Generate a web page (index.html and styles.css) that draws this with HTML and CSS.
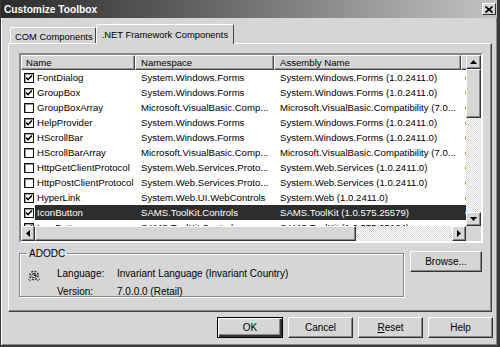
FILE: index.html
```html
<!DOCTYPE html>
<html lang="en">
<head>
  <meta charset="UTF-8">
  <title>Customize Toolbox</title>
  <link rel="stylesheet" href="styles.css">
</head>
<body>

<div class="window">
  <div class="titlebar">
    <span class="title">Customize Toolbox</span>
    <span class="close">
      <svg width="8" height="7" viewBox="0 0 8 7"><path d="M0.5 0.5 L7.5 6.5 M7.5 0.5 L0.5 6.5" stroke="#000" stroke-width="1.6"/></svg>
    </span>
  </div>

  <div class="tabs">
    <div class="tab">COM Components</div>
    <div class="tab active">.NET Framework Components</div>
  </div>

  <div class="panel">
    <div class="list">
      <div class="list-view">
        <div class="row head">
          <div class="hcell">Name</div>
          <div class="hcell">Namespace</div>
          <div class="hcell">Assembly Name</div>
          <div class="hcell">Directory</div>
        </div>
        <div class="row"><div class="cell name"><span class="check on"></span>FontDialog</div><div class="cell">System.Windows.Forms</div><div class="cell">System.Windows.Forms (1.0.2411.0)</div><div class="cell last">C</div></div>
        <div class="row"><div class="cell name"><span class="check on"></span>GroupBox</div><div class="cell">System.Windows.Forms</div><div class="cell">System.Windows.Forms (1.0.2411.0)</div><div class="cell last">C</div></div>
        <div class="row"><div class="cell name"><span class="check"></span>GroupBoxArray</div><div class="cell">Microsoft.VisualBasic.Comp...</div><div class="cell">Microsoft.VisualBasic.Compatibility (7.0...</div><div class="cell last">C</div></div>
        <div class="row"><div class="cell name"><span class="check on"></span>HelpProvider</div><div class="cell">System.Windows.Forms</div><div class="cell">System.Windows.Forms (1.0.2411.0)</div><div class="cell last">C</div></div>
        <div class="row"><div class="cell name"><span class="check on"></span>HScrollBar</div><div class="cell">System.Windows.Forms</div><div class="cell">System.Windows.Forms (1.0.2411.0)</div><div class="cell last">C</div></div>
        <div class="row"><div class="cell name"><span class="check"></span>HScrollBarArray</div><div class="cell">Microsoft.VisualBasic.Comp...</div><div class="cell">Microsoft.VisualBasic.Compatibility (7.0...</div><div class="cell last">C</div></div>
        <div class="row"><div class="cell name"><span class="check"></span>HttpGetClientProtocol</div><div class="cell">System.Web.Services.Proto...</div><div class="cell">System.Web.Services (1.0.2411.0)</div><div class="cell last">C</div></div>
        <div class="row"><div class="cell name"><span class="check"></span>HttpPostClientProtocol</div><div class="cell">System.Web.Services.Proto...</div><div class="cell">System.Web.Services (1.0.2411.0)</div><div class="cell last">C</div></div>
        <div class="row"><div class="cell name"><span class="check on"></span>HyperLink</div><div class="cell">System.Web.UI.WebControls</div><div class="cell">System.Web (1.0.2411.0)</div><div class="cell last">C</div></div>
        <div class="row selected"><div class="cell name"><span class="check on"></span>IconButton</div><div class="cell">SAMS.ToolKit.Controls</div><div class="cell">SAMS.ToolKit (1.0.575.25579)</div><div class="cell last">C</div></div>
        <div class="row"><div class="cell name"><span class="check on"></span>IconButton</div><div class="cell">SAMS.ToolKit.Controls</div><div class="cell">SAMS.ToolKit (1.0.575.25164)</div><div class="cell last">C</div></div>
      </div>

      <div class="vscroll">
        <span class="sbtn"><svg width="7" height="4" viewBox="0 0 7 4"><path d="M3.5 0 L7 4 L0 4 Z"/></svg></span>
        <span class="thumb v"></span>
        <span class="track"></span>
        <span class="sbtn"><svg width="7" height="4" viewBox="0 0 7 4"><path d="M0 0 L7 0 L3.5 4 Z"/></svg></span>
      </div>

      <div class="hscroll">
        <span class="sbtn"><svg width="4" height="7" viewBox="0 0 4 7"><path d="M4 0 L4 7 L0 3.5 Z"/></svg></span>
        <span class="thumb h"></span>
        <span class="track"></span>
        <span class="sbtn"><svg width="4" height="7" viewBox="0 0 4 7"><path d="M0 0 L4 3.5 L0 7 Z"/></svg></span>
      </div>
      <div class="corner"></div>
    </div>

    <div class="info">
      <fieldset class="group">
        <legend>ADODC</legend>
        <div class="group-body">
          <svg class="gear" width="14" height="13" viewBox="0 0 14 13">
            <circle cx="7" cy="6.5" r="4.2" fill="none" stroke="#333" stroke-width="1.4" stroke-dasharray="2 1.3"/>
            <circle cx="7" cy="6.5" r="2.2" fill="#fff" stroke="#333"/>
            <path d="M7 4.5 V6.5 H9" stroke="#000" fill="none"/>
            <path d="M1 10 L4 12 M10 12 L13 10" stroke="#555"/>
          </svg>
          <div class="props">
            <span class="key">Language:</span><span>Invariant Language (Invariant Country)</span>
            <span class="key">Version:</span><span>7.0.0.0 (Retail)</span>
          </div>
        </div>
      </fieldset>
      <button class="btn browse">Browse...</button>
    </div>
  </div>

  <div class="buttons">
    <button class="btn default">OK</button>
    <button class="btn">Cancel</button>
    <button class="btn"><u>R</u>eset</button>
    <button class="btn">Help</button>
  </div>
</div>

</body>
</html>
```

FILE: styles.css
```css
body { margin: 0; background: #d6d6d6; font-family: "Liberation Sans", Arial, sans-serif; font-size: 10px; color: #000; }

.window {
  width: 500px; height: 347px; box-sizing: border-box; background: #d6d6d6;
  border-left: 1px solid #3a3a3a; border-right: 3px solid #3a3a3a; border-bottom: 2px solid #3a3a3a;
  box-shadow: inset 1px 0 #fff, inset -1px -1px #888;
}

.titlebar {
  height: 18px; display: flex; align-items: center; justify-content: space-between;
  padding: 0 1px 0 3px; background: linear-gradient(to right, #2a2a2a, #6a6a6a 45%, #c4c4c4);
}
.title { color: #fff; font-weight: bold; font-size: 10.2px; }
.close {
  width: 14px; height: 12px; box-sizing: border-box; display: flex; align-items: center; justify-content: center;
  background: #d6d6d6; border: 1px solid; border-color: #fff #333 #333 #fff;
}

.tabs { display: flex; align-items: flex-end; height: 19px; margin-top: 6px; padding-left: 9px; font-size: 9.4px; }
.tab {
  height: 16px; box-sizing: border-box; padding: 3px 2px 0 4px; border: 1px solid; border-bottom: none;
  border-color: #fff #444 transparent #fff; border-radius: 2px 2px 0 0;
}
.tab.active { height: 20px; margin-bottom: -1px; padding: 4px 5px 0 5px; background: #d6d6d6; position: relative; z-index: 1; }

.panel {
  margin: 0 5px 0 7px; height: 269px; box-sizing: border-box; padding: 9px 0 0 10px;
  border: 1px solid; border-color: #fff #444 #444 #fff; box-shadow: inset -1px -1px #888;
}

.list {
  width: 464px; height: 190px; box-sizing: border-box; display: grid;
  grid-template-columns: 445px 15px; grid-template-rows: 171px 15px;
  border: 2px solid; border-color: #888 #fff #fff #888; box-shadow: inset 1px 1px #333;
  background: #fff; font-size: 9.6px;
}
.list-view { overflow: hidden; background: #fff; }

.row { display: grid; grid-template-columns: 114px 139px 187px 20px; height: 15px; white-space: nowrap; }
.row.head { background: #d6d6d6; }
.hcell {
  box-sizing: border-box; padding: 1px 0 0 4px; overflow: hidden; line-height: 12px;
  border: 1px solid; border-color: #fff #444 #444 #fff; box-shadow: inset -1px -1px #999;
}
.hcell + .hcell { padding-left: 5px; }
.cell { padding-left: 6px; overflow: hidden; line-height: 15px; }
.cell.name { padding-left: 3px; display: flex; align-items: center; gap: 3px; }
.cell.last { padding-left: 4px; }
.row.selected { background: linear-gradient(to right, transparent 14px, #2d2d2d 14px); color: #fff; }

.check { width: 10px; height: 10px; box-sizing: border-box; flex: none; border: 1px solid #111; background: #fff; box-shadow: inset 1px 1px #999; }
.check.on {
  background: #fff url("data:image/svg+xml,%3Csvg xmlns='http://www.w3.org/2000/svg' width='8' height='8'%3E%3Cpath d='M1 3.5 L3 5.5 L7 1.5' stroke='%23000' stroke-width='1.6' fill='none'/%3E%3C/svg%3E") center no-repeat;
}

.vscroll, .hscroll { display: flex; background: #d6d6d6; }
.vscroll { flex-direction: column; }
.sbtn {
  width: 15px; height: 14px; flex: none; box-sizing: border-box; display: flex; align-items: center; justify-content: center;
  background: #d6d6d6; border: 1px solid; border-color: #fff #333 #333 #fff; box-shadow: inset -1px -1px #888;
}
.hscroll .sbtn { width: 14px; height: 15px; }
.sbtn svg { fill: #000; }
.thumb { flex: none; box-sizing: border-box; background: #d6d6d6; border: 1px solid; border-color: #fff #333 #333 #fff; box-shadow: inset -1px -1px #888; }
.thumb.v { height: 49px; }
.thumb.h { width: 321px; }
.track { flex: 1; background: repeating-conic-gradient(#fff 0 25%, #d6d6d6 0 50%) 0 0 / 2px 2px; }
.corner { background: #d6d6d6; }

.info { display: flex; align-items: flex-start; gap: 6px; margin-top: 5px; }
.group {
  width: 385px; height: 49px; box-sizing: border-box; margin: 0; padding: 0 0 0 7px;
  border: 1px solid #888; box-shadow: 1px 1px #fff, inset 1px 1px #fff;
}
.group legend { padding: 0 2px; margin-left: 0; }
.group-body { display: flex; align-items: flex-start; gap: 16px; padding-top: 9px; }
.gear { flex: none; margin-top: 1px; }
.props { display: grid; grid-template-columns: 60px auto; row-gap: 6px; line-height: 12px; }

.btn {
  font: inherit; color: #000; background: #d6d6d6; height: 21px; box-sizing: border-box; padding: 0;
  border: 1px solid; border-color: #fff #333 #333 #fff; box-shadow: inset -1px -1px #888;
}
.btn.browse { width: 72px; margin-top: 3px; }
.buttons { display: flex; justify-content: flex-end; gap: 5px; padding: 5px 4px 0 0; }
.buttons .btn { width: 65px; }
.btn.default { border: 1px solid #000; box-shadow: inset 1px 1px #fff, inset -2px -2px #333, inset -3px -3px #888; width: 66px; }
```
